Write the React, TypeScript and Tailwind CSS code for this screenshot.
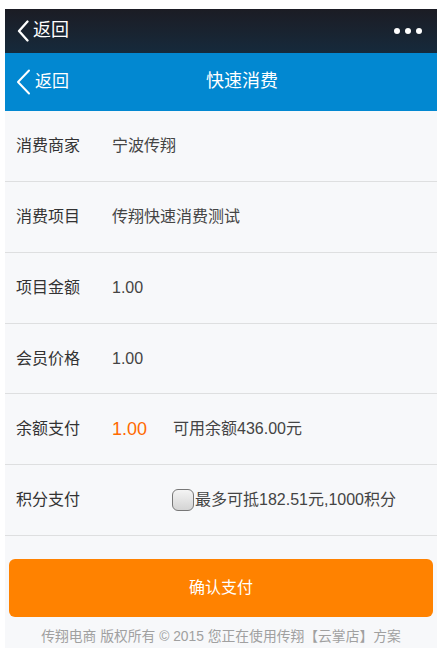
import React, { useState } from 'react';

const font = { fontFamily: '"Liberation Sans", "Noto Sans CJK SC", sans-serif' };

const Row: React.FC<{ label: string; children: React.ReactNode }> = ({ label, children }) => (
    <div className="h-[71px] flex items-center border-b border-[#dedfe0]">
        <div className="w-[107px] pl-[11px] text-[16px] text-[#333]">{label}</div>
        <div className="flex-1 flex items-center text-[16px] text-[#444]">{children}</div>
    </div>
);

const App: React.FC = () => {
    const [usePoints, setUsePoints] = useState(false);

    return (
        <div className="w-[441px] h-[655px] bg-white pt-[9px] pl-[5px] pr-[4px]" style={font}>
            <div className="h-[639px] flex flex-col bg-[#f7f8fa]">
                {/* top bar */}
                <div className="h-[44px] flex items-center justify-between px-[12px] bg-gradient-to-b from-[#1b1c24] to-[#152a3c] text-white">
                    <div className="flex items-center gap-[4px]">
                        <svg width="12" height="22" viewBox="0 0 12 22">
                            <path d="M10.5 1.5 L2 11 L10.5 20.5" stroke="white" strokeWidth="2.3" fill="none" strokeLinecap="round" strokeLinejoin="round" />
                        </svg>
                        <span className="text-[18px]">返回</span>
                    </div>
                    <div className="flex gap-[5px] pr-[3px]">
                        <span className="w-[6px] h-[6px] rounded-full bg-white" />
                        <span className="w-[6px] h-[6px] rounded-full bg-white" />
                        <span className="w-[6px] h-[6px] rounded-full bg-white" />
                    </div>
                </div>

                {/* nav bar */}
                <div className="h-[58px] flex items-center bg-[#0288d1] text-white">
                    <div className="w-[66px] flex items-center pl-[11px] gap-[4px]">
                        <svg width="15" height="26" viewBox="0 0 15 26">
                            <path d="M13 1.5 L2 13 L13 24.5" stroke="white" strokeWidth="2" fill="none" strokeLinecap="round" strokeLinejoin="round" />
                        </svg>
                        <span className="text-[17px]">返回</span>
                    </div>
                    <div className="flex-1 text-center text-[18px] pr-[24px]">快速消费</div>
                </div>

                {/* detail rows */}
                <Row label="消费商家">宁波传翔</Row>
                <Row label="消费项目">传翔快速消费测试</Row>
                <Row label="项目金额">1.00</Row>
                <Row label="会员价格">1.00</Row>
                <Row label="余额支付">
                    <span className="text-[18px] text-[#ff6a00] w-[61px]">1.00</span>
                    <span>可用余额436.00元</span>
                </Row>
                <Row label="积分支付">
                    <label className="flex items-center ml-[60px] cursor-pointer">
                        <input
                            type="checkbox"
                            checked={usePoints}
                            onChange={(e) => setUsePoints(e.target.checked)}
                            className="appearance-none w-[22px] h-[22px] rounded-[6px] border-[1.5px] border-[#777] bg-gradient-to-b from-[#f4f4f4] to-[#d4d4d4] checked:from-[#ff8a1a] checked:to-[#ff7a00]"
                        />
                        <span className="ml-[1px]">最多可抵182.51元,1000积分</span>
                    </label>
                </Row>

                {/* submit */}
                <div className="pt-[23px] px-[4px]">
                    <button className="w-full h-[58px] rounded-[6px] bg-[#ff8200] text-white text-[16px]">确认支付</button>
                </div>
                <div className="mt-[10px] text-center text-[13.8px] text-[#a0a0a0]">
                    传翔电商 版权所有 © 2015 您正在使用传翔【云掌店】方案
                </div>
            </div>
        </div>
    );
};

export default App;
